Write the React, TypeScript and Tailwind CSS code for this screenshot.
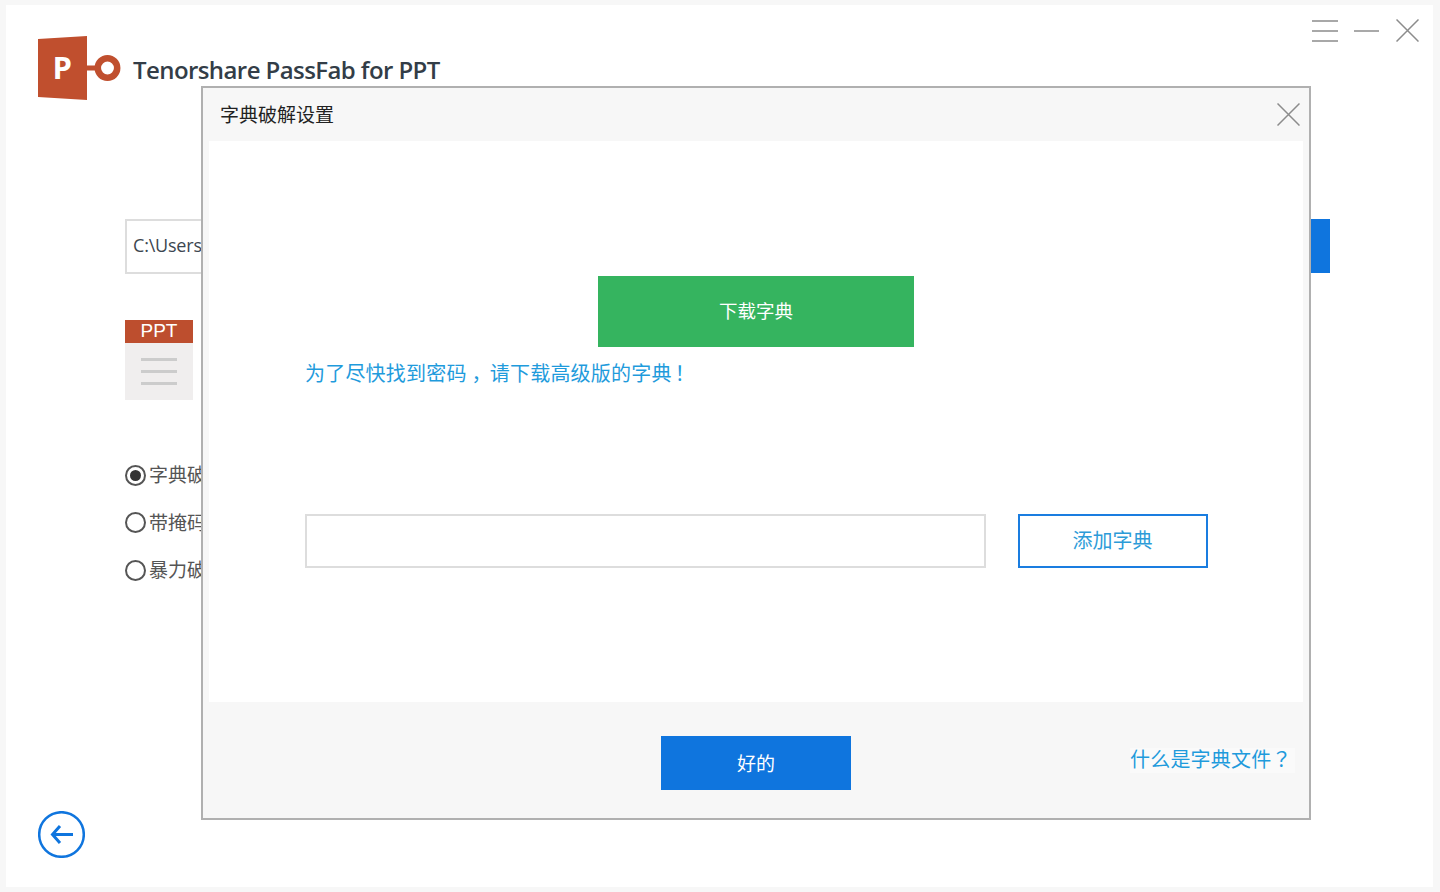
const cjk = "font-['Noto_Sans_CJK_SC','Noto_Sans',sans-serif]";
const punct = "font-['Noto_Sans_CJK_TC','Noto_Sans',sans-serif]";

function Logo() {
  return (
    <svg width="84" height="65" viewBox="0 0 84 65" className="shrink-0">
      <polygon points="0,3 49,0 49,64 0,61" fill="#c04f2e" />
      <rect x="48" y="29.500" width="12" height="5" fill="#c04f2e" />
      <circle cx="69.500" cy="32" r="9.700" fill="#fff" stroke="#c04f2e" strokeWidth="6.500" />
      <text x="14.500" y="43" fill="#ffffff" fontSize="31" fontWeight="700" fontFamily="Open Sans, sans-serif">P</text>
    </svg>
  );
}

function CloseIcon({ className = "" }: { className?: string }) {
  return (
    <svg width="23" height="23" viewBox="0 0 23 23" className={className}>
      <path d="M0.500 0.500 L22.500 22.500 M22.500 0.500 L0.500 22.500" stroke="#8c8c8c" strokeWidth="1.500" fill="none" />
    </svg>
  );
}

function Radio({ label, checked }: { label: string; checked?: boolean }) {
  return (
    <div className="flex items-center h-[24px] w-[160px] gap-[3px]">
      <span className="flex items-center justify-center w-[21px] h-[21px] rounded-full border-2 border-[#555555] bg-white shrink-0">
        {checked && <span className="block w-[11px] h-[11px] rounded-full bg-[#333333]" />}
      </span>
      <span className={`${cjk} text-[19px] leading-[22px] pb-[2px] text-[#555555] whitespace-nowrap`}>{label}</span>
    </div>
  );
}

export default function App() {
  return (
    <div className="relative w-[1440px] h-[892px] overflow-hidden bg-[#f7f7f7] pt-[5px] pl-[6px] pr-[7px] pb-[5px]">
      <div className="flex flex-col h-full bg-white">
        <header className="flex justify-between pl-[32px] pr-[14px] pt-[14px]">
          <div className="flex items-center gap-[11px] mt-[17px] h-[65px]">
            <Logo />
            <h1 className="font-['Open_Sans',sans-serif] font-semibold text-[24px] leading-[32px] mt-[2px] text-[#333d47] tracking-[-0.58px] whitespace-nowrap">
              Tenorshare PassFab for PPT
            </h1>
          </div>
          <div className="flex items-start gap-[16px]">
            <svg width="26" height="22" viewBox="0 0 26 22" className="mt-px">
              <path d="M0 1 H26 M0 11 H26 M0 21 H26" stroke="#8c8c8c" strokeWidth="1.500" fill="none" />
            </svg>
            <svg width="25" height="22" viewBox="0 0 25 22" className="mt-px">
              <path d="M0 11 H25" stroke="#8c8c8c" strokeWidth="1.500" fill="none" />
            </svg>
            <CloseIcon className="ml-px" />
          </div>
        </header>

        <main className="pl-[119px] pr-[103px]">
          <div className="flex h-[55px] mt-[118px]">
            <div className="flex-1 flex items-center border-2 border-[#dddddd] pl-[6px] pb-[2px] font-['Open_Sans',sans-serif] text-[18px] tracking-[-0.2px] text-[#3c4650]">
              C:\Users\Administrator\Desktop\demo.ppt
            </div>
            <div className="w-[100px] h-[54px] bg-[#0f75de]" />
          </div>

          <div className="w-[68px] h-[80px] mt-[46px] bg-[#f0eeee]">
            <div className="h-[23px] bg-[#bd4e2e] text-white text-center font-['Liberation_Sans',sans-serif] text-[19px] leading-[22px]">
              PPT
            </div>
            <div className="flex flex-col gap-[9px] pt-[15px] px-[16px]">
              <div className="h-[3px] bg-[#cccccc]" />
              <div className="h-[3px] bg-[#cccccc]" />
              <div className="h-[3px] bg-[#cccccc]" />
            </div>
          </div>

          <div className="flex flex-col gap-[23.500px] mt-[63px]">
            <Radio label="字典破解" checked />
            <Radio label="带掩码攻击" />
            <Radio label="暴力破解" />
          </div>
        </main>

        <button className="mt-auto ml-[32px] mb-[29px] w-[47px] h-[47px]">
          <svg width="47" height="47" viewBox="0 0 47 47">
            <circle cx="23.500" cy="23.500" r="22.300" fill="none" stroke="#0f75de" strokeWidth="2.500" />
            <path d="M35 23.500 H15 M22 15 L14.500 23.500 L22 32" fill="none" stroke="#0f75de" strokeWidth="3" />
          </svg>
        </button>
      </div>

      <div className="absolute left-[201px] top-[86px] w-[1110px] h-[734px] border-2 border-[#b0b0b0] bg-[#f7f7f7] flex flex-col">
        <div className="flex items-center justify-between h-[53px] pl-[18px] pr-[9px] shrink-0">
          <span className={`${cjk} text-[19px] leading-[24px] pb-[2px] -ml-px text-[#222222]`}>字典破解设置</span>
          <CloseIcon />
        </div>

        <div className="mx-[6px] h-[561px] bg-white shrink-0 flex flex-col">
          <button className={`${cjk} block mx-auto mt-[135px] w-[316px] h-[71px] pb-[2px] bg-[#35b45f] text-white text-[18.500px]`}>
            下载字典
          </button>
          <p className={`${cjk} mt-[13px] pl-[96px] text-[#1f9bdc] text-[20px] tracking-[0.2px] leading-[26px] whitespace-nowrap`}>
            为了尽快找到密码<span className="ml-[5px] -mr-[2px]">，</span>请下载高级版的字典<span className={`${punct} -ml-[2px]`}>！</span>
          </p>
          <div className="flex gap-[32px] mt-[128px] pl-[96px]">
            <div className="w-[681px] h-[54px] border-2 border-[#dddddd] bg-white" />
            <button className={`${cjk} w-[190px] h-[54px] pb-[2px] pr-px border-2 border-[#1a7de0] bg-white text-[#2c9bd8] text-[20px]`}>
              添加字典
            </button>
          </div>
        </div>

        <div className="flex items-start pl-[458px] pt-[34px]">
          <button className={`${cjk} w-[190px] h-[54px] bg-[#0f75de] text-white text-[19px] shrink-0`}>
            好的
          </button>
          <a className={`${cjk} ml-[279px] mt-[12px] w-[165px] h-[25px] bg-[#fafafa] text-[#1f9bdc] text-[20px] tracking-[0.2px] leading-[22px] whitespace-nowrap`}>
            什么是字典文件<span className={punct}>？</span>
          </a>
        </div>
      </div>
    </div>
  );
}
